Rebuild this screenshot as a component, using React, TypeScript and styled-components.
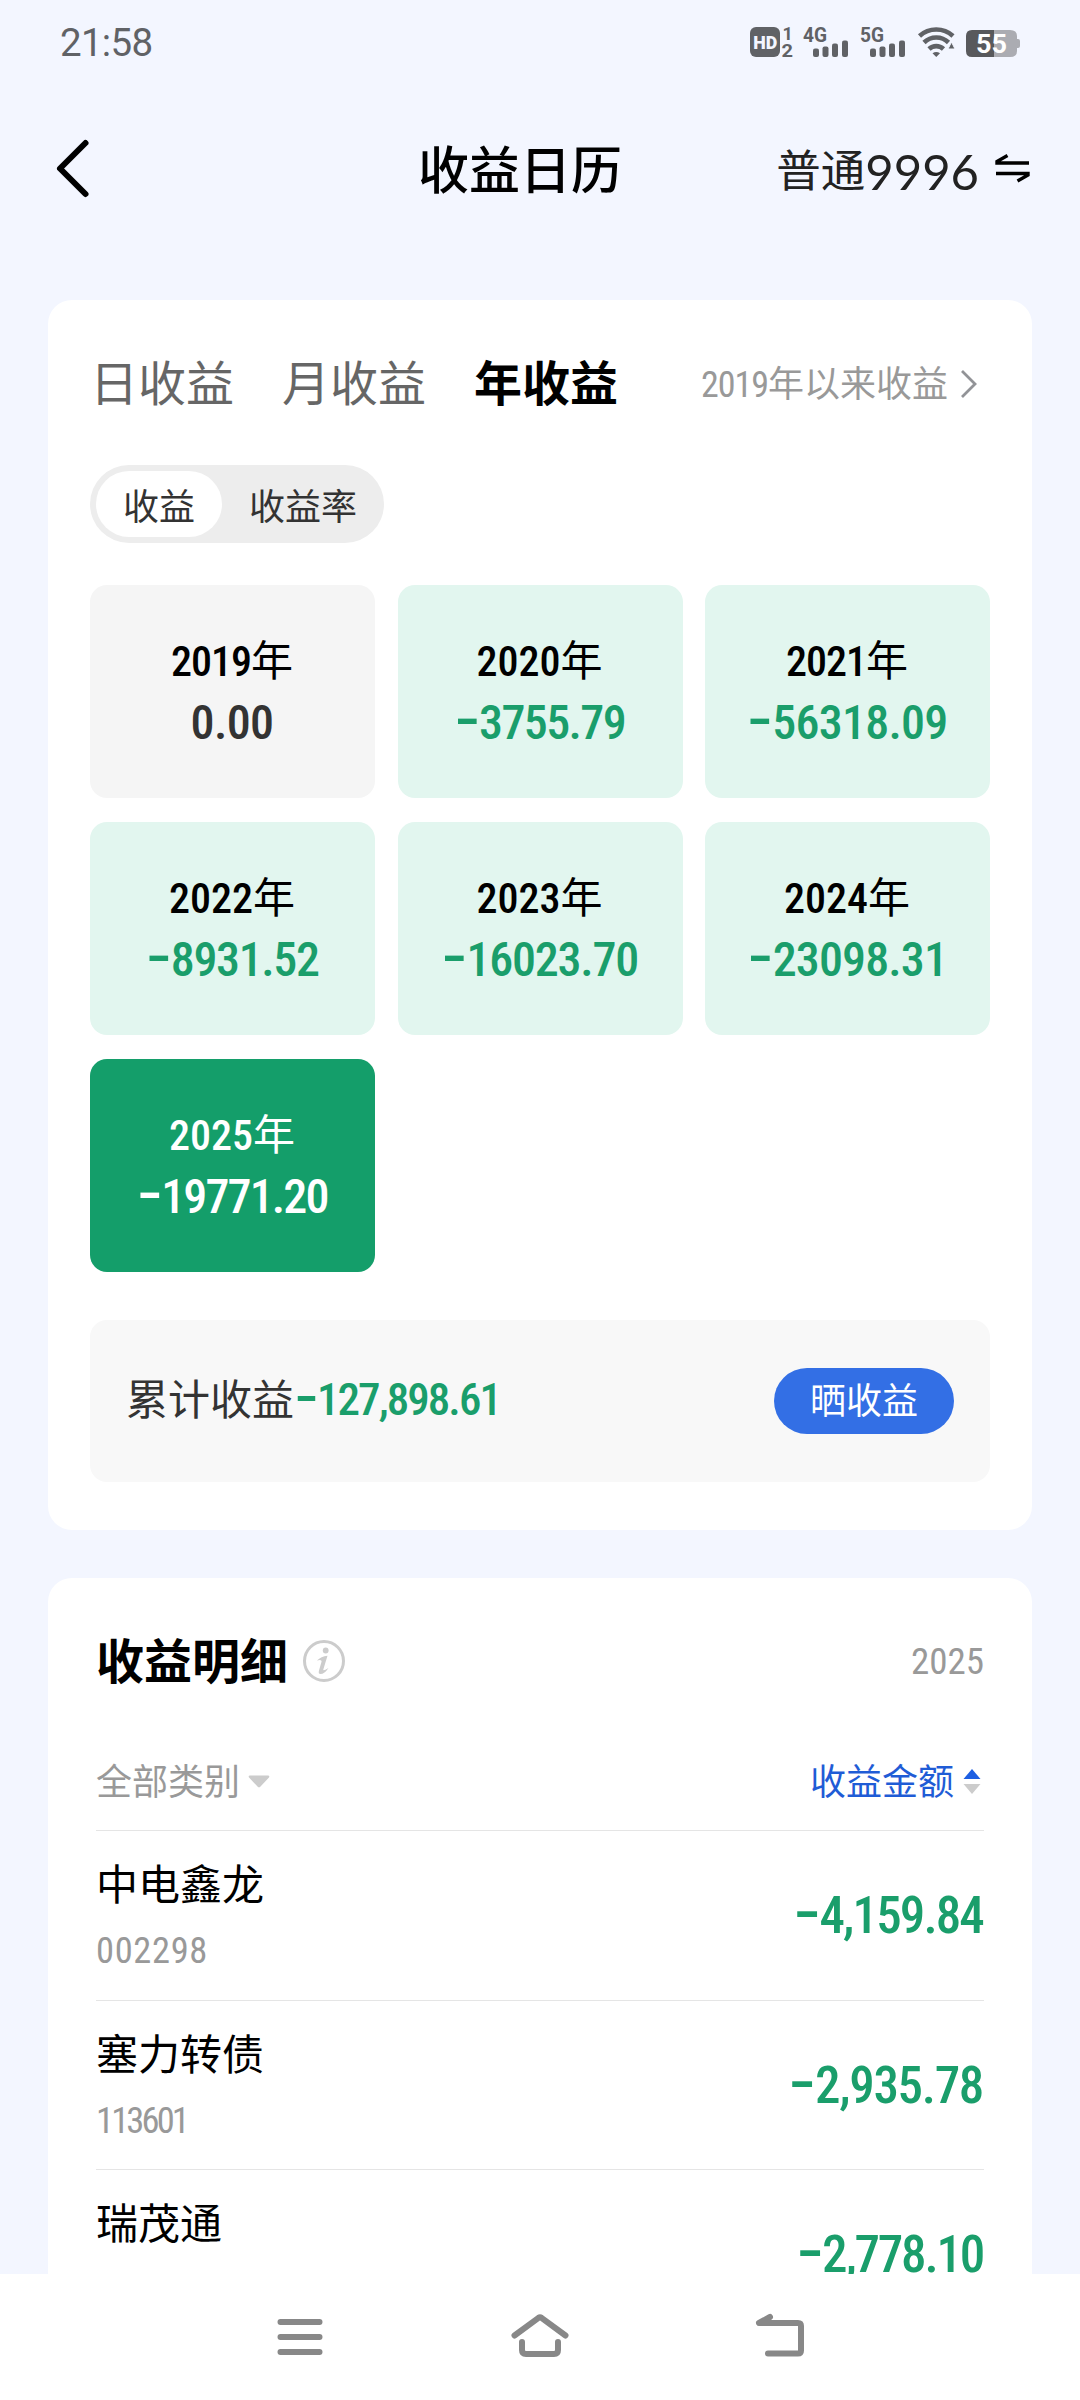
import React, { useLayoutEffect, useRef, useState } from "react";
import styled, { createGlobalStyle } from "styled-components";

const GREEN = "#1a9e6b";

const Global = createGlobalStyle`
  * { box-sizing: border-box; }
  body {
    margin: 0;
    background: #f3f6ff;
    font-family: Roboto, "Noto Sans CJK SC", sans-serif;
    color: #000;
  }
`;

const Screen = styled.div`
  width: 1080px;
  height: 2400px;
  display: flex;
  flex-direction: column;
  overflow: hidden;
  background: #f3f6ff;
`;

const StatusBar = styled.div`
  flex: none;
  height: 84px;
  padding: 0 60px;
  display: flex;
  align-items: center;
  justify-content: space-between;
`;

const Clock = styled.div`
  font-size: 38.5px;
  line-height: 82px;
  padding-top: 2px;
  letter-spacing: -0.7px;
  color: #606266;
`;

const Header = styled.div`
  flex: none;
  height: 170px;
  padding: 0 51px 0 56px;
  display: grid;
  grid-template-columns: 362px 204px 1fr;
  align-items: center;
`;

const Title = styled.div`
  font-size: 51px;
  line-height: 70px;
  font-weight: 500;
  white-space: nowrap;
  padding-top: 6px;
`;

const Account = styled.div`
  display: flex;
  justify-content: flex-end;
  align-items: center;
  gap: 16px;
  font-size: 44.5px;
  line-height: 70px;
  color: #222;
  white-space: nowrap;
`;

const AccountName = styled.span`
  display: flex;
  align-items: center;
`;

const AccountLabel = styled.span`
  padding-top: 6px;
`;

const AccountDigits = styled.span`
  padding-top: 3px;
  font-family: Lato, sans-serif;
  font-size: 49px;
`;

const Body = styled.div`
  flex: 1;
  min-height: 0;
  overflow: hidden;
  padding: 46px 48px 0;
  display: flex;
  flex-direction: column;
  gap: 48px;
`;

const Card = styled.section<{ $side: number; $bottom?: number }>`
  flex: none;
  background: #fff;
  border-radius: 24px;
  padding: 0 ${(p) => p.$side}px ${(p) => p.$bottom ?? 0}px;
`;

const Tabs = styled.div`
  height: 165px;
  padding-top: 4px;
  display: flex;
  align-items: center;
  gap: 48px;
`;

const Tab = styled.span<{ $active?: boolean }>`
  font-size: 48px;
  line-height: 64px;
  white-space: nowrap;
  color: ${(p) => (p.$active ? "#000" : "#666")};
  font-weight: ${(p) => (p.$active ? 700 : 400)};
`;

const SinceLink = styled.span`
  margin-left: auto;
  margin-right: 13px;
  display: flex;
  align-items: center;
  gap: 13px;
  font-size: 36px;
  line-height: 64px;
  color: #999;
  white-space: nowrap;
`;

const Segment = styled.div`
  width: 294px;
  height: 78px;
  padding: 6px;
  border-radius: 39px;
  background: #ededed;
  display: flex;
`;

const SegmentItem = styled.div<{ $active?: boolean }>`
  flex: none;
  width: ${(p) => (p.$active ? 126 : 156)}px;
  padding-left: ${(p) => (p.$active ? 0 : 6)}px;
  height: 66px;
  border-radius: 33px;
  background: ${(p) => (p.$active ? "#fff" : "transparent")};
  font-size: 36px;
  line-height: 74px;
  text-align: center;
  color: #333;
`;

const YearGrid = styled.div`
  margin-top: 42px;
  display: grid;
  grid-template-columns: repeat(3, 285px);
  column-gap: 22.5px;
  row-gap: 24px;
`;

type Tone = "flat" | "loss" | "selected";

const toneBg: Record<Tone, string> = { flat: "#f5f5f5", loss: "#e2f6ef", selected: "#149e6a" };
const toneFg: Record<Tone, string> = { flat: "#333", loss: GREEN, selected: "#fff" };

const YearCell = styled.div<{ $tone: Tone }>`
  height: 213px;
  padding-right: 1px;
  border-radius: 17px;
  background: ${(p) => toneBg[p.$tone]};
  display: flex;
  flex-direction: column;
  align-items: center;
  justify-content: center;
`;

const YearLabel = styled.div<{ $tone: Tone }>`
  font-size: 42px;
  line-height: 61px;
  white-space: nowrap;
  color: ${(p) => (p.$tone === "selected" ? "#fff" : "#000")};
`;

const YearAmount = styled.div<{ $tone: Tone }>`
  font-size: 48px;
  line-height: 61px;
  color: ${(p) => toneFg[p.$tone]};
`;

const Din = styled.span<{ $weight: number }>`
  display: inline-block;
  font-family: "Roboto Condensed", Roboto, sans-serif;
  font-weight: ${(p) => p.$weight};
  white-space: nowrap;
`;

const Sign = styled.span`
  font-family: Inter, sans-serif;
  font-size: 1.2em;
  line-height: 0;
  font-feature-settings: "calt" 0;
`;

const Summary = styled.div`
  margin-top: 48px;
  height: 162px;
  padding: 0 36px;
  border-radius: 17px;
  background: #f8f8f8;
  display: flex;
  align-items: center;
  justify-content: space-between;
`;

const SummaryText = styled.div`
  font-size: 42px;
  line-height: 60px;
  color: #333;
  white-space: nowrap;
`;

const SummaryAmount = styled.span`
  font-size: 45px;
  line-height: 0;
  color: ${GREEN};
`;

const ShareButton = styled.button`
  width: 180px;
  height: 66px;
  padding: 2px 0 0;
  border: 0;
  border-radius: 33px;
  background: #336fe5;
  color: #fff;
  font: 400 36px/64px Roboto, "Noto Sans CJK SC", sans-serif;
`;

const DetailHead = styled.div`
  height: 166px;
  display: flex;
  align-items: center;
`;

const DetailTitle = styled.h2`
  margin: 0 15px 0 0;
  padding-top: 3px;
  font-size: 48px;
  line-height: 64px;
  font-weight: 700;
  white-space: nowrap;
`;

const DetailYear = styled.span`
  margin-left: auto;
  padding-top: 2px;
  font-size: 37px;
  line-height: 64px;
  color: #999;
`;

const FilterRow = styled.div`
  height: 87px;
  padding-bottom: 10px;
  border-bottom: 1px solid #e5e5e5;
  display: flex;
  align-items: center;
  justify-content: space-between;
`;

const Filter = styled.span<{ $active?: boolean }>`
  display: flex;
  align-items: center;
  gap: ${(p) => (p.$active ? 9 : 8)}px;
  padding-right: ${(p) => (p.$active ? 3 : 0)}px;
  color: ${(p) => (p.$active ? "#1f5cd6" : "#999")};
`;

const FilterLabel = styled.span`
  padding-top: 2px;
  font-size: 36px;
  line-height: 60px;
`;

const StockRow = styled.div`
  height: 169.5px;
  border-bottom: 1px solid #e5e5e5;
  display: flex;
  align-items: center;
  justify-content: space-between;
`;

const StockInfo = styled.div`
  align-self: flex-start;
  padding-top: 25px;
`;

const StockName = styled.div`
  font-size: 42px;
  line-height: 60px;
`;

const StockCode = styled.div`
  margin-top: 13px;
  font-size: 36.5px;
  line-height: 44px;
  color: #999;
`;

const StockAmount = styled.div`
  padding: 2px 1px 0 0;
  font-size: 51px;
  line-height: 70px;
  color: ${GREEN};
`;

const NavBar = styled.nav`
  flex: none;
  height: 126px;
  padding: 0 180px;
  background: #fff;
  display: grid;
  grid-template-columns: repeat(3, 240px);
  justify-items: center;
  align-items: center;
`;

const Glyph = styled.svg`
  display: block;
  flex: none;
  overflow: visible;
`;

/* Tracks its digits so that the run fills exactly `width` pixels. */
function Digits({ text, width, weight = 500 }: { text: string; width: number; weight?: number }) {
  const ref = useRef<HTMLSpanElement>(null);
  const [spacing, setSpacing] = useState(0);
  useLayoutEffect(() => {
    const natural = ref.current!.getBoundingClientRect().width;
    setSpacing((s) => s + (width - natural) / text.length);
  }, [text, width]);
  const negative = text.startsWith("-");
  return (
    <Din ref={ref} $weight={weight} style={{ letterSpacing: `${spacing}px` }}>
      {negative && <Sign>-</Sign>}
      {negative ? text.slice(1) : text}
    </Din>
  );
}

function Signal({ x, label }: { x: number; label: string }) {
  return (
    <g transform={`translate(${x} 0)`}>
      <text x="-1" y="15" fontFamily="Roboto" fontWeight="700" fontSize="20" textLength="24" lengthAdjust="spacingAndGlyphs">{label}</text>
      <rect x="9" y="21.5" width="6" height="8.5" rx="2" />
      <rect x="18.5" y="19.5" width="6" height="10.5" rx="2" />
      <rect x="28" y="16.5" width="6" height="13.5" rx="2" />
      <rect x="38" y="13.5" width="6" height="16.5" rx="2" />
    </g>
  );
}

function StatusIcons() {
  return (
    <Glyph width="270" height="30" viewBox="0 0 270 30" fill="#606266">
      <rect x="0" y="0" width="30" height="30" rx="6" />
      <text x="3.2" y="22" fill="#f3f6ff" fontFamily="Roboto" fontWeight="900" fontSize="19" textLength="24" lengthAdjust="spacingAndGlyphs">HD</text>
      <text x="32.5" y="13" fontFamily="Roboto" fontWeight="700" fontSize="18">1</text>
      <text x="31.5" y="30" fontFamily="Roboto" fontWeight="700" fontSize="18" textLength="11.500" lengthAdjust="spacingAndGlyphs">2</text>
      <Signal x={54} label="4G" />
      <Signal x={111} label="5G" />
      <g fill="none" stroke="#606266" strokeWidth="4.600">
        <path d="M169.5 9 A25 25 0 0 1 203 9" />
        <path d="M174 15.500 A17.500 17.500 0 0 1 198.500 15.500" />
        <path d="M179 22 A10.500 10.500 0 0 1 193.500 22" />
      </g>
      <path d="M182.500 26.300 Q186.250 23.500 190 26.300 L186.250 30 Z" />
      <path d="M201.500 15 L205 22 L198 22 Z" stroke="#f3f6ff" strokeWidth="1" />
      <path d="M222 3 H244 V30 H222 Q216 30 216 24 V9 Q216 3 222 3 Z" fill="#58595c" />
      <path d="M244 3 H260 Q267 3 267 9 V12 H268 Q270 12 270 14 V19 Q270 21 268 21 H267 V24 Q267 30 260 30 H244 Z" fill="#abacb2" />
      <text x="226" y="25.500" fill="#fff" fontFamily="Roboto" fontWeight="700" fontSize="26" textLength="31" lengthAdjust="spacingAndGlyphs">55</text>
    </Glyph>
  );
}

const BackIcon = () => (
  <Glyph width="34" height="58" viewBox="0 0 34 58" fill="none" stroke="#000" strokeWidth="6" strokeLinecap="round" strokeLinejoin="round">
    <path d="M29.500 3 L4 28.500 L29.500 54" />
  </Glyph>
);

const SwapIcon = () => (
  <Glyph width="34" height="28" viewBox="0 0 34 28" fill="none" stroke="#000" strokeWidth="3.400">
    <path d="M34 8 H2 V6.500 L12.500 0.500" />
    <path d="M1 18.500 H33 V20 L22.500 26" />
  </Glyph>
);

const ChevronIcon = () => (
  <Glyph width="16" height="28" viewBox="0 0 16 28" fill="none" stroke="#929397" strokeWidth="2.800">
    <path d="M1 0 L14 13 L1 26" />
  </Glyph>
);

const InfoIcon = () => (
  <Glyph width="42" height="42" viewBox="0 0 42 42" fill="none" stroke="#ccc" strokeWidth="3">
    <circle cx="21" cy="21" r="19.500" />
    <circle cx="22.700" cy="10.500" r="2.900" fill="#ccc" stroke="none" />
    <path d="M14 20.500 Q18 16.500 24.500 15.800 L20.300 29.500 Q19.800 31.500 25.500 28 Q21.500 34 17.500 34 Q15 34 16 30.500 L18.600 21.500 Q18.800 19 14 20.500 Z" fill="#ccc" stroke="none" />
  </Glyph>
);

const DropIcon = () => (
  <Glyph width="22" height="14" viewBox="0 0 22 14" fill="#ccc">
    <path d="M2 0.500 H20 Q22 0.500 21 2.500 L12.500 11.500 Q11 13.200 9.500 11.500 L1 2.500 Q0 0.500 2 0.500 Z" />
  </Glyph>
);

const SortIcon = () => (
  <Glyph width="18" height="26" viewBox="0 0 18 26">
    <path d="M0.500 10 L9 0 L17.500 10 Z" fill="#1d5fe2" />
    <path d="M0.500 15 L9 25 L17.500 15 Z" fill="#ccc" />
  </Glyph>
);

const MenuIcon = () => (
  <Glyph width="46" height="36" viewBox="0 0 46 36" stroke="#888" strokeWidth="6" strokeLinecap="round">
    <path d="M3.500 3 H42.500 M3.500 18 H42.500 M3.500 33 H42.500" />
  </Glyph>
);

const HomeIcon = () => (
  <Glyph width="58" height="48" viewBox="0 0 58 48" fill="none" stroke="#888" strokeWidth="6" strokeLinecap="round" strokeLinejoin="round">
    <path d="M3.500 22.500 L27.500 4.800 Q29 3.800 30.500 4.800 L54.500 22.500" />
    <path d="M11 29 V37 Q11 41 15 41 H43 Q47 41 47 37 V29" />
  </Glyph>
);

const ReturnIcon = () => (
  <Glyph width="48" height="48" viewBox="0 0 48 48" fill="none" stroke="#888" strokeWidth="6" strokeLinecap="round" strokeLinejoin="round">
    <path d="M14 4 L3 10 H42 Q45 10 45 13 V37.500 Q45 40.500 42 40.500 H12" />
  </Glyph>
);

const years: { year: string; yearWidth: number; amount: string; width: number; tone: Tone }[] = [
  { year: "2019", yearWidth: 80, amount: "0.00", width: 83, tone: "flat" },
  { year: "2020", yearWidth: 84, amount: "-3755.79", width: 171, tone: "loss" },
  { year: "2021", yearWidth: 80, amount: "-56318.09", width: 201, tone: "loss" },
  { year: "2022", yearWidth: 84, amount: "-8931.52", width: 173, tone: "loss" },
  { year: "2023", yearWidth: 84, amount: "-16023.70", width: 197, tone: "loss" },
  { year: "2024", yearWidth: 84, amount: "-23098.31", width: 200, tone: "loss" },
  { year: "2025", yearWidth: 84, amount: "-19771.20", width: 191, tone: "selected" },
];

const stocks = [
  { name: "中电鑫龙", code: "002298", codeWidth: 112, amount: "-4,159.84", width: 190 },
  { name: "塞力转债", code: "113601", codeWidth: 91, amount: "-2,935.78", width: 195 },
  { name: "瑞茂通", amount: "-2,778.10", width: 187 },
];

export default function App() {
  return (
    <Screen>
      <Global />
      <StatusBar>
        <Clock>21:58</Clock>
        <StatusIcons />
      </StatusBar>
      <Header>
        <BackIcon />
        <Title>收益日历</Title>
        <Account>
          <AccountName>
            <AccountLabel>普通</AccountLabel>
            <AccountDigits>9996</AccountDigits>
          </AccountName>
          <SwapIcon />
        </Account>
      </Header>
      <Body>
        <Card $side={42} $bottom={48}>
          <Tabs>
            <Tab>日收益</Tab>
            <Tab>月收益</Tab>
            <Tab $active>年收益</Tab>
            <SinceLink>
              <span>
                <Digits text="2019" width={67} weight={400} />
                年以来收益
              </span>
              <ChevronIcon />
            </SinceLink>
          </Tabs>
          <Segment>
            <SegmentItem $active>收益</SegmentItem>
            <SegmentItem>收益率</SegmentItem>
          </Segment>
          <YearGrid>
            {years.map((y) => (
              <YearCell key={y.year} $tone={y.tone}>
                <YearLabel $tone={y.tone}>
                  <Digits text={y.year} width={y.yearWidth} />年
                </YearLabel>
                <YearAmount $tone={y.tone}>
                  <Digits text={y.amount} width={y.width} />
                </YearAmount>
              </YearCell>
            ))}
          </YearGrid>
          <Summary>
            <SummaryText>
              累计收益
              <SummaryAmount>
                <Digits text="-127,898.61" width={206} />
              </SummaryAmount>
            </SummaryText>
            <ShareButton>晒收益</ShareButton>
          </Summary>
        </Card>
        <Card $side={48}>
          <DetailHead>
            <DetailTitle>收益明细</DetailTitle>
            <InfoIcon />
            <DetailYear>
              <Digits text="2025" width={73} weight={400} />
            </DetailYear>
          </DetailHead>
          <FilterRow>
            <Filter>
              <FilterLabel>全部类别</FilterLabel>
              <DropIcon />
            </Filter>
            <Filter $active>
              <FilterLabel>收益金额</FilterLabel>
              <SortIcon />
            </Filter>
          </FilterRow>
          {stocks.map((s) => (
            <StockRow key={s.name}>
              <StockInfo>
                <StockName>{s.name}</StockName>
                {s.code && (
                  <StockCode>
                    <Digits text={s.code} width={s.codeWidth!} weight={400} />
                  </StockCode>
                )}
              </StockInfo>
              <StockAmount>
                <Digits text={s.amount} width={s.width} />
              </StockAmount>
            </StockRow>
          ))}
        </Card>
      </Body>
      <NavBar>
        <MenuIcon />
        <HomeIcon />
        <ReturnIcon />
      </NavBar>
    </Screen>
  );
}
